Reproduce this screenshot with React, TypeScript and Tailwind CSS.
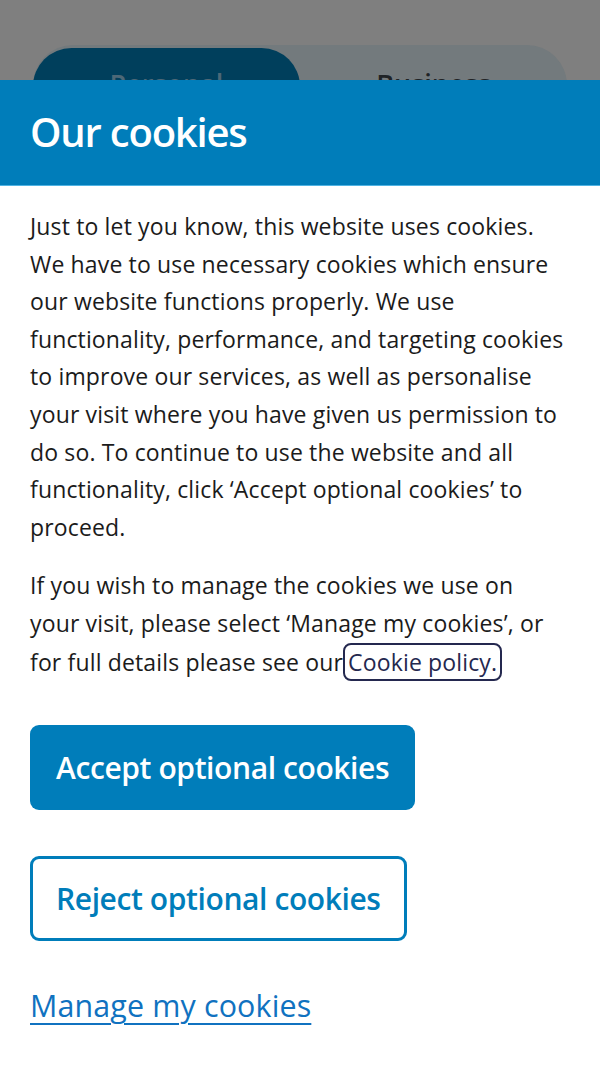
const paragraphs = [
  "Just to let you know, this website uses cookies. We have to use necessary cookies which ensure our website functions properly. We use functionality, performance, and targeting cookies to improve our services, as well as personalise your visit where you have given us permission to do so. To continue to use the website and all functionality, click \u2018Accept optional cookies\u2019 to proceed.",
];

const font = { fontFamily: "'Open Sans', 'Liberation Sans', sans-serif" };

const App = () => {
  return (
    <div className="min-h-screen flex flex-col bg-white" style={font}>
      {/* page behind the dialog, dimmed */}
      <div className="h-[80px] overflow-hidden bg-[#7f7f7f] px-[33px] pt-[45px]">
        <div className="flex h-[80px] rounded-[40px] bg-[#737a7d] pt-[3px]">
          <div className="w-[267px] rounded-[40px] bg-[#003f5c] flex justify-center pt-[22px] text-[27px] font-semibold text-[#4d6877] leading-none">
            Personal
          </div>
          <div className="flex-1 flex justify-center pt-[22px] text-[27px] font-semibold text-[#1f2326] leading-none">
            Business
          </div>
        </div>
      </div>

      <div className="flex-1 flex flex-col">
        <div className="h-[106px] bg-[#007dba] border-b border-[#4fb3e3] px-[30px] flex items-center">
          <h1 className="text-[40px] font-semibold text-white leading-none tracking-[-1.2px] pb-[2px]">Our cookies</h1>
        </div>

        <div className="px-[30px] pt-[22px] text-[23px] tracking-[0.15px] leading-[37.6px] text-[#1b1b1b]">
          {paragraphs.map((p, i) => (
            <p key={i} className="mb-[21px]">{p}</p>
          ))}
          <p>
            If you wish to manage the cookies we use on
            <br />
            your visit, please select {"\u2018"}Manage my cookies{"\u2019"}, or
            <br />
            for full details please see our
            <a href="#" className="inline-block leading-[34px] px-[3px] border-2 border-[#24284f] rounded-[8px] text-[#24284f]">Cookie policy.</a>
          </p>

          <div className="flex flex-col items-start mt-[44px]">
            <button className="h-[85px] px-[26px] rounded-[9px] bg-[#007dba] text-white text-[30px] font-semibold tracking-[-0.4px]">
              Accept optional cookies
            </button>
            <button className="mt-[46px] h-[85px] px-[23px] rounded-[9px] border-[3px] border-[#007dba] text-[#007dba] text-[30px] font-semibold tracking-[-0.4px]">
              Reject optional cookies
            </button>
            <a href="#" className="mt-[46px] text-[30.4px] text-[#1072c0] underline underline-offset-[6px] decoration-2">
              Manage my cookies
            </a>
          </div>
        </div>
      </div>
    </div>
  );
};

export default App;
